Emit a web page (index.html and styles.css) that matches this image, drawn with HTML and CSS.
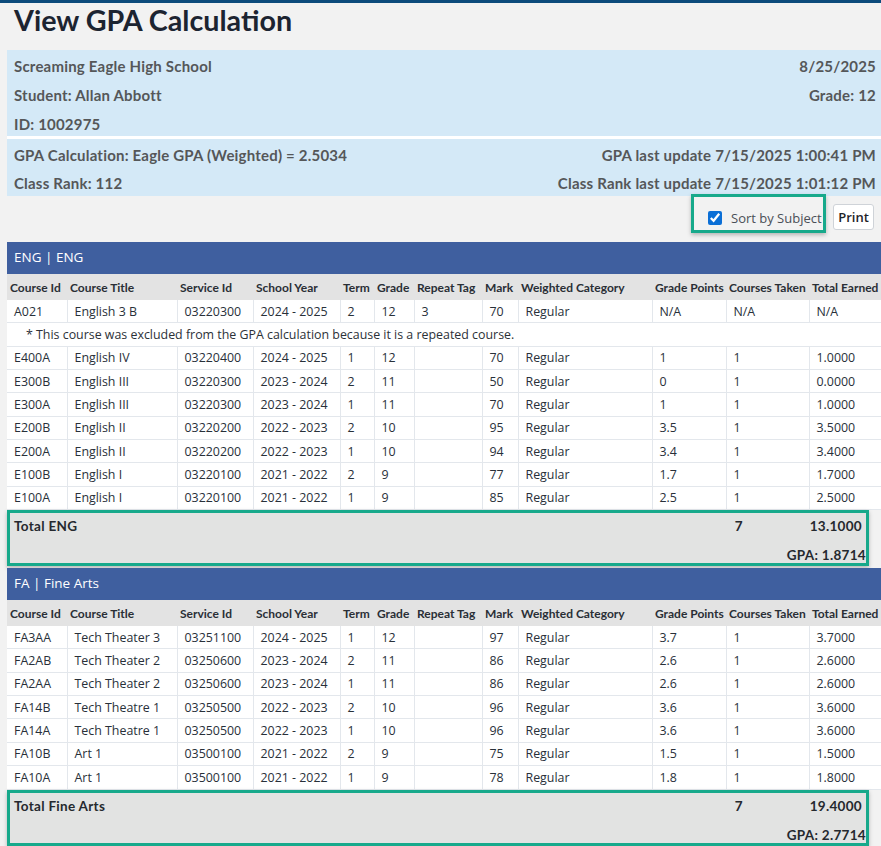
FILE: index.html
```html
<!DOCTYPE html>
<html lang="en">
<head>
<meta charset="utf-8">
<title>View GPA Calculation</title>
<link rel="stylesheet" href="styles.css">
</head>
<body>
<div class="topbar"></div>
<div class="page">
  <h1 class="title">View GPA Calculation</h1>

  <div class="info info-student">
    <div class="info-row"><span>Screaming Eagle High School</span><span>8/25/2025</span></div>
    <div class="info-row"><span>Student: Allan Abbott</span><span>Grade: 12</span></div>
    <div class="info-row"><span>ID: 1002975</span><span></span></div>
  </div>
  <div class="info info-gpa">
    <div class="info-row"><span>GPA Calculation: Eagle GPA (Weighted) = 2.5034</span><span>GPA last update 7/15/2025 1:00:41 PM</span></div>
    <div class="info-row"><span>Class Rank: 112</span><span>Class Rank last update 7/15/2025 1:01:12 PM</span></div>
  </div>

  <div class="controls">
    <label class="sort-box"><input type="checkbox" checked class="sort-check"><span>Sort by Subject</span></label>
    <button class="print-btn" type="button">Print</button>
  </div>

  <section class="subject">
    <div class="subject-bar">ENG | ENG</div>
    <table class="courses">
      <colgroup>
        <col class="c-id"><col class="c-title"><col class="c-svc"><col class="c-year"><col class="c-term"><col class="c-grade"><col class="c-rep"><col class="c-mark"><col class="c-cat"><col class="c-gp"><col class="c-ct"><col class="c-te">
      </colgroup>
      <thead>
        <tr><th>Course Id</th><th>Course Title</th><th>Service Id</th><th>School Year</th><th>Term</th><th>Grade</th><th>Repeat Tag</th><th>Mark</th><th>Weighted Category</th><th>Grade Points</th><th>Courses Taken</th><th>Total Earned</th></tr>
      </thead>
      <tbody>
        <tr><td>A021</td><td>English 3 B</td><td>03220300</td><td>2024 - 2025</td><td>2</td><td>12</td><td>3</td><td>70</td><td>Regular</td><td>N/A</td><td>N/A</td><td>N/A</td></tr>
        <tr class="note"><td colspan="12">* This course was excluded from the GPA calculation because it is a repeated course.</td></tr>
        <tr><td>E400A</td><td>English IV</td><td>03220400</td><td>2024 - 2025</td><td>1</td><td>12</td><td></td><td>70</td><td>Regular</td><td>1</td><td>1</td><td>1.0000</td></tr>
        <tr><td>E300B</td><td>English III</td><td>03220300</td><td>2023 - 2024</td><td>2</td><td>11</td><td></td><td>50</td><td>Regular</td><td>0</td><td>1</td><td>0.0000</td></tr>
        <tr><td>E300A</td><td>English III</td><td>03220300</td><td>2023 - 2024</td><td>1</td><td>11</td><td></td><td>70</td><td>Regular</td><td>1</td><td>1</td><td>1.0000</td></tr>
        <tr><td>E200B</td><td>English II</td><td>03220200</td><td>2022 - 2023</td><td>2</td><td>10</td><td></td><td>95</td><td>Regular</td><td>3.5</td><td>1</td><td>3.5000</td></tr>
        <tr><td>E200A</td><td>English II</td><td>03220200</td><td>2022 - 2023</td><td>1</td><td>10</td><td></td><td>94</td><td>Regular</td><td>3.4</td><td>1</td><td>3.4000</td></tr>
        <tr><td>E100B</td><td>English I</td><td>03220100</td><td>2021 - 2022</td><td>2</td><td>9</td><td></td><td>77</td><td>Regular</td><td>1.7</td><td>1</td><td>1.7000</td></tr>
        <tr><td>E100A</td><td>English I</td><td>03220100</td><td>2021 - 2022</td><td>1</td><td>9</td><td></td><td>85</td><td>Regular</td><td>2.5</td><td>1</td><td>2.5000</td></tr>
      </tbody>
    </table>
    <div class="total-box">
      <div class="total-row"><span class="total-label">Total ENG</span><span class="total-count">7</span><span class="total-sum">13.1000</span></div>
      <div class="total-gpa">GPA: 1.8714</div>
    </div>
  </section>

  <section class="subject">
    <div class="subject-bar">FA | Fine Arts</div>
    <table class="courses">
      <colgroup>
        <col class="c-id"><col class="c-title"><col class="c-svc"><col class="c-year"><col class="c-term"><col class="c-grade"><col class="c-rep"><col class="c-mark"><col class="c-cat"><col class="c-gp"><col class="c-ct"><col class="c-te">
      </colgroup>
      <thead>
        <tr><th>Course Id</th><th>Course Title</th><th>Service Id</th><th>School Year</th><th>Term</th><th>Grade</th><th>Repeat Tag</th><th>Mark</th><th>Weighted Category</th><th>Grade Points</th><th>Courses Taken</th><th>Total Earned</th></tr>
      </thead>
      <tbody>
        <tr><td>FA3AA</td><td>Tech Theater 3</td><td>03251100</td><td>2024 - 2025</td><td>1</td><td>12</td><td></td><td>97</td><td>Regular</td><td>3.7</td><td>1</td><td>3.7000</td></tr>
        <tr><td>FA2AB</td><td>Tech Theater 2</td><td>03250600</td><td>2023 - 2024</td><td>2</td><td>11</td><td></td><td>86</td><td>Regular</td><td>2.6</td><td>1</td><td>2.6000</td></tr>
        <tr><td>FA2AA</td><td>Tech Theater 2</td><td>03250600</td><td>2023 - 2024</td><td>1</td><td>11</td><td></td><td>86</td><td>Regular</td><td>2.6</td><td>1</td><td>2.6000</td></tr>
        <tr><td>FA14B</td><td>Tech Theatre 1</td><td>03250500</td><td>2022 - 2023</td><td>2</td><td>10</td><td></td><td>96</td><td>Regular</td><td>3.6</td><td>1</td><td>3.6000</td></tr>
        <tr><td>FA14A</td><td>Tech Theatre 1</td><td>03250500</td><td>2022 - 2023</td><td>1</td><td>10</td><td></td><td>96</td><td>Regular</td><td>3.6</td><td>1</td><td>3.6000</td></tr>
        <tr><td>FA10B</td><td>Art 1</td><td>03500100</td><td>2021 - 2022</td><td>2</td><td>9</td><td></td><td>75</td><td>Regular</td><td>1.5</td><td>1</td><td>1.5000</td></tr>
        <tr><td>FA10A</td><td>Art 1</td><td>03500100</td><td>2021 - 2022</td><td>1</td><td>9</td><td></td><td>78</td><td>Regular</td><td>1.8</td><td>1</td><td>1.8000</td></tr>
      </tbody>
    </table>
    <div class="total-box">
      <div class="total-row"><span class="total-label">Total Fine Arts</span><span class="total-count">7</span><span class="total-sum">19.4000</span></div>
      <div class="total-gpa">GPA: 2.7714</div>
    </div>
  </section>
</div>
</body>
</html>
```

FILE: styles.css
```css
html, body {
  margin: 0;
  padding: 0;
}
body {
  background: #f2f2f2;
  overflow: hidden;
  font-family: "Open Sans", "Noto Sans", sans-serif;
  color: #2b3036;
}
.topbar {
  height: 3px;
  background: #0d4b7c;
}
.page {
  padding-left: 7px;
  width: 874px;
}
.title {
  margin: 0;
  height: 47px;
  padding-left: 7px;
  font-family: "Lato", sans-serif;
  font-weight: 700;
  font-size: 28.7px;
  line-height: 34px;
  color: #1c2431;
}
.info {
  background: #d4e9f7;
  font-family: "Lato", sans-serif;
  font-weight: 700;
  font-size: 15px;
  letter-spacing: 0.2px;
  color: #555759;
  box-sizing: border-box;
}
.info-student {
  height: 86px;
  padding-top: 1px;
}
.info-gpa {
  height: 60px;
  border-top: 3px solid #ffffff;
  padding-top: 2px;
}
.info-row {
  display: flex;
  justify-content: space-between;
  align-items: center;
  padding: 0 5px 0 7px;
}
.info-student .info-row { height: 29px; }
.info-gpa .info-row { height: 28px; }

.controls {
  display: flex;
  justify-content: flex-end;
  align-items: center;
  height: 46px;
  padding-right: 7px;
  box-sizing: border-box;
}
.sort-box {
  display: flex;
  align-items: center;
  box-sizing: border-box;
  width: 135px;
  height: 39px;
  margin-top: -11px;
  border: 3px solid #17a98b;
  box-shadow: 0 2px 4px rgba(0, 0, 0, 0.25);
  padding: 9px 0 0 14px;
  font-size: 13px;
  color: #4a4f57;
}
.sort-check {
  width: 14px;
  height: 14px;
  margin: 0 9px 0 0;
  accent-color: #0b6fd6;
}
.print-btn {
  margin-left: 7px;
  width: 41px;
  height: 26px;
  padding: 0;
  background: #ffffff;
  border: 1px solid #cfd3d8;
  border-radius: 3px;
  font-family: "Open Sans", sans-serif;
  font-weight: 600;
  font-size: 13px;
  color: #1f2328;
  margin-top: -4px;
}

.subject-bar {
  height: 32px;
  background: #3f5f9f;
  color: #ffffff;
  font-size: 13.5px;
  line-height: 31px;
  padding-left: 7px;
}
.courses {
  width: 874px;
  table-layout: fixed;
  border-collapse: collapse;
  background: #ffffff;
  font-size: 12.4px;
}
.c-id { width: 60px; }
.c-title { width: 110px; }
.c-svc { width: 76px; }
.c-year { width: 87px; }
.c-term { width: 34px; }
.c-grade { width: 40px; }
.c-rep { width: 68px; }
.c-mark { width: 36px; }
.c-cat { width: 134px; }
.c-gp { width: 74px; }
.c-ct { width: 83px; }
.c-te { width: 72px; }

.courses th {
  height: 26px;
  padding: 0 0 0 3px;
  background: #e3e3e3;
  text-align: left;
  font-family: "Lato", sans-serif;
  font-weight: 700;
  font-size: 12px;
  color: #2a2f36;
  white-space: nowrap;
  overflow: hidden;
  border: none;
}
.courses td {
  height: 22.35px;
  padding: 0 0 0 7px;
  border: 1px solid #e3e7ec;
  white-space: nowrap;
  overflow: hidden;
  color: #283039;
}
.courses tbody tr:first-child td { border-top: none; }
.courses td:first-child { border-left: none; }
.courses .note td {
  padding-left: 19px;
  color: #2c3138;
}

.total-box {
  box-sizing: border-box;
  width: 862px;
  height: 56px;
  margin-bottom: 2px;
  border: 3px solid #17a98b;
  background: #e2e3e2;
  box-shadow: 0 2px 4px rgba(0, 0, 0, 0.25);
  font-family: "Lato", sans-serif;
  font-weight: 700;
  font-size: 13.5px;
  letter-spacing: 0.3px;
  color: #25292e;
  padding: 4px 4px 0 4px;
}
.total-row {
  display: grid;
  grid-template-columns: 1fr 75px auto;
  height: 18px;
  line-height: 18px;
}
.total-gpa {
  margin-top: 11px;
  height: 18px;
  line-height: 18px;
  text-align: right;
  margin-right: -4px;
}
```
